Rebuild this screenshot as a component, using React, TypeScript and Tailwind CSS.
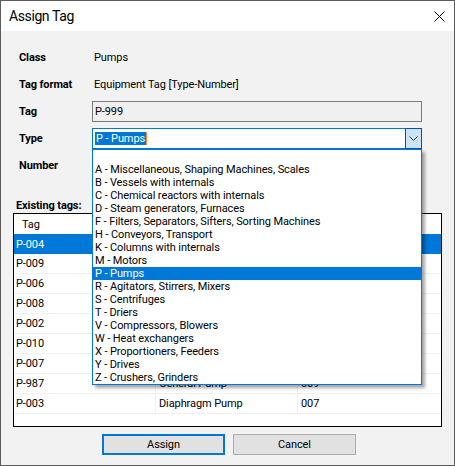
import React from "react";

const typeOptions = [
  "",
  "A - Miscellaneous, Shaping Machines, Scales",
  "B - Vessels with internals",
  "C - Chemical reactors with internals",
  "D - Steam generators, Furnaces",
  "F - Filters, Separators, Sifters, Sorting Machines",
  "H - Conveyors, Transport",
  "K - Columns with internals",
  "M - Motors",
  "P - Pumps",
  "R - Agitators, Stirrers, Mixers",
  "S - Centrifuges",
  "T - Driers",
  "V - Compressors, Blowers",
  "W - Heat exchangers",
  "X - Proportioners, Feeders",
  "Y - Drives",
  "Z - Crushers, Grinders",
];

// rows whose other columns sit behind the open list are left blank there
const tags = [
  { tag: "P-004", desc: "", num: "" },
  { tag: "P-009", desc: "", num: "" },
  { tag: "P-006", desc: "", num: "" },
  { tag: "P-008", desc: "", num: "" },
  { tag: "P-002", desc: "", num: "" },
  { tag: "P-010", desc: "", num: "" },
  { tag: "P-007", desc: "", num: "" },
  { tag: "P-987", desc: "General Pump", num: "009" },
  { tag: "P-003", desc: "Diaphragm Pump", num: "007" },
];

function FieldRow({ label, children }: { label: string; children?: React.ReactNode }) {
  return (
    <div className="flex h-[27px] items-center">
      <span className="w-[73px] shrink-0 font-bold">{label}</span>
      {children}
    </div>
  );
}

export default function App() {
  return (
    <div className="relative flex h-[466px] w-[455px] flex-col border border-[#5c5c5c] bg-[#f2f2f2] font-['Roboto',sans-serif] text-[11px] leading-[13px] tracking-[-0.1px] text-black">
      {/* title bar */}
      <div className="flex h-[30px] shrink-0 items-center justify-between bg-white pl-[8px] pr-[9px]">
        <span className="text-[14px] leading-[18px] tracking-[-0.4px]">Assign Tag</span>
        <svg width="11" height="11" viewBox="0 0 11 11" className="text-black">
          <path d="M0.5 0.5 L10.5 10.5 M10.5 0.5 L0.5 10.5" stroke="currentColor" strokeWidth="1" fill="none" />
        </svg>
      </div>

      <div className="flex flex-1 flex-col px-[12px] pt-[13px]">
        <div className="flex flex-col pl-[6px]">
          <FieldRow label="Class">
            <span className="pl-[2px]">Pumps</span>
          </FieldRow>
          <FieldRow label="Tag format">
            <span className="pl-[2px]">Equipment Tag [Type-Number]</span>
          </FieldRow>
          <FieldRow label="Tag">
            <div className="flex h-[21px] w-[330px] items-center border border-[#7a7a7a] bg-[#f0f0f0] px-[2px]">
              P-999
            </div>
          </FieldRow>
          <FieldRow label="Type">
            <div className="flex h-[21px] w-[330px] items-stretch border border-[#0078d7] bg-white">
              <div className="flex flex-1 items-center pl-[2px]">
                <span className="bg-[#0078d7] px-[1px] text-white">P - Pumps</span>
                <span className="h-[13px] w-px bg-[#ff8728]" />
              </div>
              <div className="-my-px -mr-px flex w-[17px] items-center justify-center border border-[#005499] bg-[#cce4f7]">
                <svg width="9" height="6" viewBox="0 0 9 6">
                  <path d="M0.5 0.5 L4.5 4.5 L8.5 0.5" stroke="#3c3c3c" strokeWidth="1" fill="none" />
                </svg>
              </div>
            </div>
          </FieldRow>
          <FieldRow label="Number" />
        </div>

        <div className="mt-[20px] pl-[3px] font-bold leading-[14px]">Existing tags:</div>

        <div className="flex h-[214px] flex-col border border-black bg-white">
          <div className="grid h-[20px] shrink-0 grid-cols-[142px_142px_1fr] items-center">
            <span className="flex h-full items-center border-r border-[#e5e5e5] pl-[8px]">Tag</span>
            <span className="h-full border-r border-[#e5e5e5]" />
            <span />
          </div>
          {tags.map((t, i) => (
            <div
              key={t.tag}
              className={
                i === 0
                  ? "grid h-[20px] shrink-0 grid-cols-[142px_142px_1fr] items-center bg-[#0078d7] text-white"
                  : "grid h-[20px] shrink-0 grid-cols-[142px_142px_1fr] items-center border-b border-[#f0f0f0]"
              }
            >
              <span className="flex h-full items-center border-r border-[#f0f0f0] pl-[2px]">{t.tag}</span>
              <span className="flex h-full items-center border-r border-[#f0f0f0] pl-[3px]">{t.desc}</span>
              <span className="pl-[3px]">{t.num}</span>
            </div>
          ))}
        </div>

        <div className="mt-[7px] flex gap-[8px] pl-[89px]">
          <button className="h-[21px] w-[123px] border-2 border-[#0078d7] bg-[#e1e1e1]">Assign</button>
          <button className="h-[21px] w-[123px] border border-[#adadad] bg-[#e1e1e1]">Cancel</button>
        </div>
      </div>

      {/* open dropdown list */}
      <div className="absolute left-[91px] top-[148px] w-[330px] border border-[#0078d7] bg-white shadow-[3px_3px_3px_rgba(0,0,0,0.35)]">
        {typeOptions.map((o, i) => (
          <div
            key={i}
            className={
              o === "P - Pumps"
                ? "h-[13px] whitespace-nowrap bg-[#0078d7] pl-[2px] leading-[13px] text-white"
                : "h-[13px] whitespace-nowrap pl-[2px] leading-[13px]"
            }
          >
            {o}
          </div>
        ))}
      </div>
    </div>
  );
}
